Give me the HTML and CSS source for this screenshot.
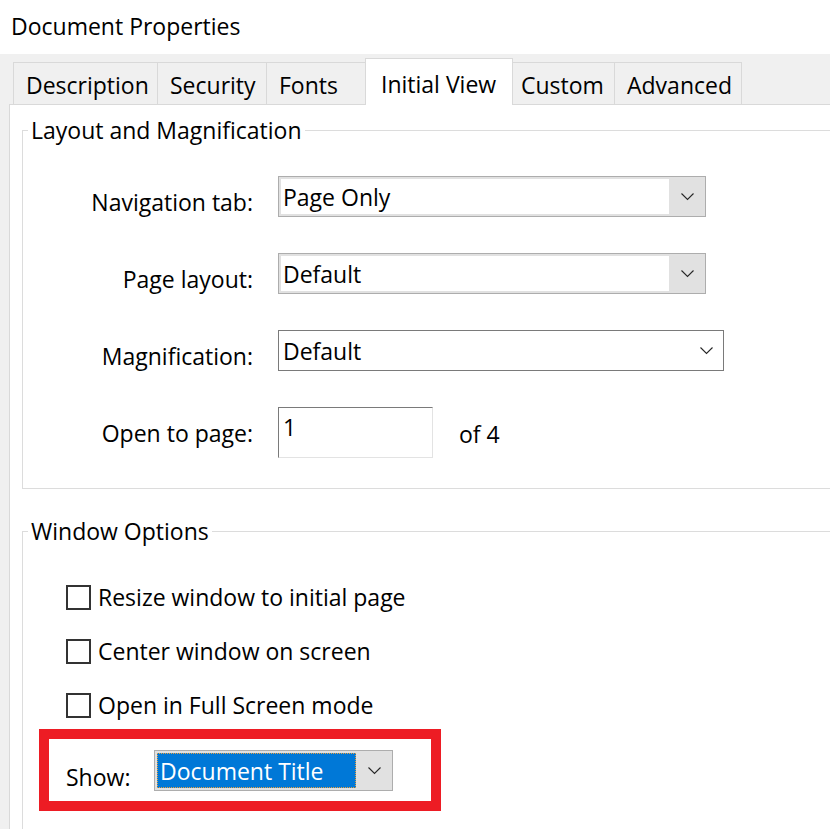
FILE: index.html
```html
<!DOCTYPE html>
<html lang="en">
<head>
<meta charset="utf-8">
<title>Document Properties</title>
<link rel="stylesheet" href="styles.css">
</head>
<body>
<div class="title">Document Properties</div>
<div class="tabstrip">
  <div class="tab t-desc">Description</div>
  <div class="tab t-sec">Security</div>
  <div class="tab t-fonts">Fonts</div>
  <div class="tab active t-iv">Initial View</div>
  <div class="tab t-custom">Custom</div>
  <div class="tab t-adv">Advanced</div>
</div>
<div class="panel">
  <fieldset class="group g-layout">
    <legend>Layout and Magnification</legend>
    <div class="form">
      <label class="lbl">Navigation tab:</label>
      <div class="combo combo-std">
        <div class="field">Page Only</div>
        <div class="btn"><svg width="13" height="8" viewBox="0 0 13 8"><path d="M0.5 0.5 L6.5 6.5 L12.5 0.5" fill="none" stroke="#262626" stroke-width="1.1"/></svg></div>
      </div>
      <label class="lbl">Page layout:</label>
      <div class="combo combo-std">
        <div class="field">Default</div>
        <div class="btn"><svg width="13" height="8" viewBox="0 0 13 8"><path d="M0.5 0.5 L6.5 6.5 L12.5 0.5" fill="none" stroke="#262626" stroke-width="1.1"/></svg></div>
      </div>
      <label class="lbl">Magnification:</label>
      <div class="combo-flat">
        <div class="flat-text">Default</div>
        <svg width="13" height="8" viewBox="0 0 13 8"><path d="M0.5 0.5 L6.5 6.5 L12.5 0.5" fill="none" stroke="#262626" stroke-width="1.1"/></svg>
      </div>
      <label class="lbl">Open to page:</label>
      <div class="page-row">
        <div class="textbox">1</div>
        <div class="of">of 4</div>
      </div>
    </div>
  </fieldset>
  <fieldset class="group g-window">
    <legend>Window Options</legend>
    <div class="checks">
      <div class="check-row"><span class="box"></span><span>Resize window to initial page</span></div>
      <div class="check-row"><span class="box"></span><span>Center window on screen</span></div>
      <div class="check-row"><span class="box"></span><span>Open in Full Screen mode</span></div>
    </div>
    <div class="highlight">
      <span class="show-lbl">Show:</span>
      <div class="combo combo-show">
        <div class="field selected"><span class="focus">Document Title</span></div>
        <div class="btn"><svg width="13" height="8" viewBox="0 0 13 8"><path d="M0.5 0.5 L6.5 6.5 L12.5 0.5" fill="none" stroke="#262626" stroke-width="1.1"/></svg></div>
      </div>
    </div>
  </fieldset>
</div>
</body>
</html>
```
FILE: styles.css
```css
html, body {
  margin: 0;
  padding: 0;
}
body {
  width: 830px;
  height: 829px;
  overflow: hidden;
  background: #f0f0f0;
  font-family: "Open Sans", "Noto Sans", sans-serif;
  font-size: 23px;
  line-height: 32px;
  color: #000;
}
.title {
  height: 54px;
  box-sizing: border-box;
  background: #fff;
  padding: 10px 0 0 11px;
}
.tabstrip {
  height: 50px;
  display: flex;
  align-items: flex-end;
  padding-left: 13px;
  background: #f0f0f0;
}
.tab {
  box-sizing: border-box;
  height: 42px;
  border: 1px solid #d9d9d9;
  border-bottom: none;
  margin-left: -1px;
  padding: 6px 0 0 12px;
  background: #f0f0f0;
  white-space: nowrap;
}
.t-desc { width: 145px; margin-left: 0; }
.t-sec { width: 110px; }
.t-fonts { width: 100px; }
.t-iv { width: 148px; padding-left: 15px; }
.t-custom { width: 103px; padding-left: 8px; }
.t-adv { width: 128px; }
.tab.active {
  height: 47px;
  background: #fff;
  position: relative;
  z-index: 1;
  margin-bottom: -1px;
  padding-top: 9px;
}
.panel {
  margin-left: 9px;
  height: 725px;
  box-sizing: border-box;
  overflow: hidden;
  background: #fff;
  border-top: 1px solid #d9d9d9;
  border-left: 1px solid #d9d9d9;
}
.group {
  margin: 0 -30px 0 12px;
  padding: 0;
  border: 1px solid #dcdcdc;
  min-width: 0;
}
.group legend {
  margin-left: 5px;
  padding: 0 3px;
  line-height: 32px;
}
.g-layout { margin-top: 9px; }
.g-window { margin-top: 26px; height: 330px; box-sizing: border-box; }
.form {
  display: grid;
  grid-template-columns: 230px auto;
  column-gap: 25px;
  row-gap: 36px;
  padding: 30px 0 30px 0;
  justify-items: start;
  align-items: start;
}
.lbl {
  justify-self: end;
  box-sizing: border-box;
  height: 41px;
  padding-top: 10px;
}
.combo {
  box-sizing: border-box;
  display: flex;
  height: 41px;
  border: 1px solid #adadad;
  background: #e1e1e1;
  padding: 2px 0 2px 2px;
}
.combo-std { width: 428px; }
.combo .field {
  flex: 1;
  background: #fff;
  padding-left: 2px;
  display: flex;
  align-items: center;
  white-space: nowrap;
}
.combo .btn {
  width: 36px;
  display: flex;
  align-items: center;
  justify-content: center;
}
.combo-flat {
  box-sizing: border-box;
  width: 446px;
  height: 41px;
  border: 1px solid #7a7a7a;
  background: #fff;
  display: flex;
  align-items: center;
  justify-content: space-between;
  padding: 0 10px 0 4px;
}
.page-row {
  display: flex;
  align-items: flex-start;
  gap: 26px;
}
.textbox {
  box-sizing: border-box;
  width: 155px;
  height: 51px;
  border: 1px solid;
  border-color: #7a7a7a #e3e3e3 #e3e3e3 #7a7a7a;
  padding: 3px 0 0 4px;
}
.of { padding-top: 11px; }
.checks {
  display: flex;
  flex-direction: column;
  gap: 22px;
  padding: 34px 0 0 43px;
}
.check-row {
  display: flex;
  align-items: center;
  gap: 7px;
  height: 32px;
}
.box {
  box-sizing: border-box;
  width: 25px;
  height: 25px;
  border: 2px solid #333;
  background: #fff;
}
.highlight {
  box-sizing: border-box;
  width: 402px;
  height: 82px;
  margin: 8px 0 0 16px;
  border: 10px solid #ed1c24;
  display: flex;
  align-items: flex-start;
  padding: 11px 0 0 17px;
}
.show-lbl {
  margin-top: 11px;
  width: 88px;
}
.combo-show { width: 239px; }
.combo .field.selected {
  background: #0078d7;
  color: #fff;
  padding: 0;
  border: 1px dotted #e8a040;
}
.focus { padding-left: 2px; }
```
